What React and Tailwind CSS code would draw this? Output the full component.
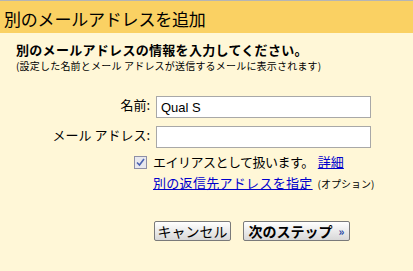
export default function App() {
  const jp = { fontFamily: '"Noto Sans CJK JP", "Liberation Sans", sans-serif' };
  return (
    <div className="w-[413px] h-[271px] bg-[#fff7d7] text-black overflow-hidden" style={jp}>
      <div className="h-px bg-[#b5b5b5]" />
      <div className="h-[32px] bg-[#fad163] flex items-center pl-[4px]">
        <span className="text-[17px] leading-none tracking-[-0.2px] mt-[3px]">別のメールアドレスを追加</span>
      </div>
      <div className="pl-[16px] pt-[9px]">
        <div className="text-[13px] font-bold leading-[16px] tracking-[0.3px]">別のメールアドレスの情報を入力してください。</div>
        <div className="text-[10px] leading-[13px] mt-[1px] tracking-[0.2px]">(設定した名前とメール アドレスが送信するメールに表示されます)</div>
      </div>
      <div className="mt-[24px] flex flex-col gap-[8px]">
        <div className="flex items-start">
          <div className="w-[150px] text-right text-[13px] leading-[16px] pt-[1px]">名前:</div>
          <input
            defaultValue="Qual S"
            className="ml-[6px] w-[215px] h-[22px] border border-[#a8a8a8] bg-white px-[4px] text-[13px] outline-none"
            style={{ fontFamily: '"Liberation Sans", Arial, sans-serif' }}
          />
        </div>
        <div className="flex items-start">
          <div className="w-[150px] text-right text-[13px] leading-[16px] pt-[1px]">メール アドレス:</div>
          <input className="ml-[6px] w-[215px] h-[22px] border border-[#a8a8a8] bg-white px-[4px] text-[13px] outline-none" />
        </div>
      </div>
      <div className="mt-[7px] pl-[134px]">
        <div className="flex items-center h-[14px]">
          <span className="w-[13px] h-[13px] border border-[#8e8fa6] bg-[#e8e8ee] flex items-center justify-center">
            <svg width="9" height="9" viewBox="0 0 9 9">
              <path d="M1 4.5 L3.5 7 L8 1" stroke="#4a62b0" strokeWidth="1.6" fill="none" />
            </svg>
          </span>
          <span className="ml-[6px] text-[13px] leading-[16px] tracking-[-0.5px]">エイリアスとして扱います。</span>
          <a className="ml-[4px] text-[13px] leading-[16px] text-[#0000cc] underline">詳細</a>
        </div>
        <div className="flex items-baseline pl-[19px] mt-[6px]">
          <a className="text-[13px] leading-[16px] text-[#0000cc] underline tracking-[0.3px]">別の返信先アドレスを指定</a>
          <span className="ml-[5px] text-[10px] leading-[13px]">(オプション)</span>
        </div>
      </div>
      <div className="mt-[30px] pl-[154px] flex gap-[12px]">
        <button className="w-[77px] h-[20px] rounded-[2px] border border-[#7a7a7a] bg-gradient-to-b from-white to-[#d8d8d8] text-[14px] leading-none flex items-center justify-center">
          キャンセル
        </button>
        <button className="w-[107px] h-[20px] rounded-[2px] border border-[#7a7a7a] bg-gradient-to-b from-white to-[#d8d8d8] text-[14px] font-bold leading-none flex items-center justify-center">
          次のステップ<span className="ml-[6px] text-[11px] text-[#2040a0]">»</span>
        </button>
      </div>
    </div>
  );
}
